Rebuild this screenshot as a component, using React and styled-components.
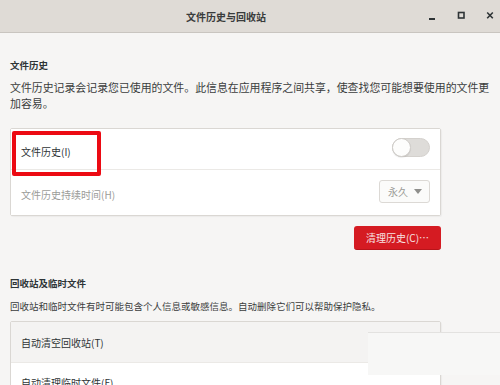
import styled, { createGlobalStyle } from 'styled-components';

const Global = createGlobalStyle`
  html, body {
    margin: 0;
    padding: 0;
    background: #f6f5f4;
  }
  body {
    font-family: "Noto Sans CJK SC", "Noto Sans", "DejaVu Sans", sans-serif;
    color: #2e3436;
  }
`;

const Window = styled.div`
  position: relative;
  width: 500px;
  height: 385px;
  overflow: hidden;
  background: #f6f5f4;
`;

const TitleBar = styled.div`
  height: 32px;
  display: flex;
  align-items: center;
  padding-left: 32px;
  background: #dfdbd6;
  border-bottom: 1px solid #c9c5c0;
`;

const Title = styled.div`
  flex: 1;
  text-align: center;
  font-size: 10px;
  font-weight: 700;
  color: #3a3c3c;
`;

const Controls = styled.div`
  width: 80px;
  display: flex;
  align-items: center;
  justify-content: flex-end;
  gap: 21px;
  padding-right: 6px;
  box-sizing: border-box;
`;

const Content = styled.div`
  padding: 24px 10px 0 10px;
  display: flex;
  flex-direction: column;
`;

const Heading = styled.div`
  font-size: 9.5px;
  font-weight: 700;
  line-height: 16px;
  color: #2e3436;
  margin-top: ${p => p.gap || 0}px;
`;

const Desc = styled.div`
  margin-top: ${p => p.gap || 6}px;
  font-size: ${p => p.size || 10}px;
  line-height: 16px;
  white-space: nowrap;
  color: #3b3d3d;
`;

const Card = styled.div`
  position: relative;
  width: 431px;
  box-sizing: border-box;
  margin-top: ${p => p.gap}px;
  background: #fff;
  border: 1px solid #dad7d3;
  border-radius: 2px;
  box-shadow: 1px 1px 1px rgba(0, 0, 0, 0.04);
`;

const Row = styled.div`
  height: ${p => p.h}px;
  display: flex;
  align-items: center;
  justify-content: space-between;
  padding: 0 10px;
  background: ${p => (p.shade ? '#f4f3f2' : '#fff')};
  border-top: ${p => (p.first ? 'none' : '1px solid #ebe9e6')};
`;

const Label = styled.span`
  font-size: 10px;
  color: ${p => (p.dim ? '#9b9c99' : '#2e3436')};
  padding-top: ${p => p.drop || 0}px;
`;

const Switch = styled.div`
  width: 38px;
  height: 19px;
  border-radius: 10px;
  background: #dedcd9;
  box-sizing: border-box;
  border: 1px solid #d4d1cd;
  display: flex;
  align-items: center;
  margin-top: -3px;
`;

const Knob = styled.div`
  width: 19px;
  height: 19px;
  margin-left: -1px;
  border-radius: 50%;
  background: #fdfdfc;
  border: 1px solid #cfccc8;
  box-sizing: border-box;
  box-shadow: 0 1px 1px rgba(0, 0, 0, 0.08);
`;

const Combo = styled.div`
  width: 51px;
  height: 23px;
  box-sizing: border-box;
  display: flex;
  align-items: center;
  justify-content: space-between;
  padding: 0 7px 0 8px;
  border: 1px solid #dcd9d5;
  border-radius: 3px;
  background: #fbfbfa;
  font-size: 10px;
  color: #9c9b98;
  margin-top: -3px;
`;

const Caret = styled.span`
  width: 0;
  height: 0;
  border-left: 4px solid transparent;
  border-right: 4px solid transparent;
  border-top: 5px solid #8f8f8c;
`;

const Actions = styled.div`
  width: 431px;
  display: flex;
  justify-content: flex-end;
  margin-top: 10px;
`;

const DangerButton = styled.div`
  width: 87px;
  height: 24px;
  display: flex;
  align-items: center;
  justify-content: center;
  border-radius: 3px;
  background: #d51b22;
  border-bottom: 1px solid #b8141a;
  box-sizing: border-box;
  font-size: 10px;
  color: #f7e1e1;
`;

const Marker = styled.div`
  position: absolute;
  left: 1px;
  top: 2px;
  width: 89px;
  height: 45px;
  box-sizing: border-box;
  border: 4px solid #ec0a13;
  border-radius: 2px;
  pointer-events: none;
`;

const Ghost = styled.div`
  position: absolute;
  left: 368px;
  top: 332px;
  width: 132px;
  height: 42px;
  background: #f7f7f6;
  border-top: 1px solid #e3e2e0;
`;

function WinIcon({ kind }) {
  if (kind === 'min')
    return (
      <svg width="8" height="10" viewBox="0 0 8 10">
        <rect x="1" y="7" width="6" height="2" fill="#2e3436" />
      </svg>
    );
  if (kind === 'max')
    return (
      <svg width="8" height="10" viewBox="0 0 8 10">
        <rect x="1.5" y="1.5" width="5.5" height="5.5" fill="none" stroke="#2e3436" strokeWidth="1.6" />
      </svg>
    );
  return (
    <svg width="8" height="10" viewBox="0 0 8 10">
      <path d="M1.2 1.5 L6.8 7.2 M6.8 1.5 L1.2 7.2" stroke="#2e3436" strokeWidth="1.6" />
    </svg>
  );
}

export default function App() {
  return (
    <Window>
      <Global />
      <TitleBar>
        <Title>文件历史与回收站</Title>
        <Controls>
          <WinIcon kind="min" />
          <WinIcon kind="max" />
          <WinIcon kind="close" />
        </Controls>
      </TitleBar>

      <Content>
        <Heading>文件历史</Heading>
        <Desc size={10.9}>
          文件历史记录会记录您已使用的文件。此信息在应用程序之间共享，使查找您可能想要使用的文件更
          <br />
          加容易。
        </Desc>

        <Card gap={17}>
          <Row h={40} first>
            <Label drop={4}>文件历史(I)</Label>
            <Switch>
              <Knob />
            </Switch>
          </Row>
          <Row h={45}>
            <Label dim drop={3}>文件历史持续时间(H)</Label>
            <Combo>
              永久
              <Caret />
            </Combo>
          </Row>
          <Marker />
        </Card>

        <Actions>
          <DangerButton>清理历史(C)…</DangerButton>
        </Actions>

        <Heading gap={25}>回收站及临时文件</Heading>
        <Desc size={9.5} gap={7}>
          回收站和临时文件有时可能包含个人信息或敏感信息。自动删除它们可以帮助保护隐私。
        </Desc>

        <Card gap={7}>
          <Row h={40} first shade>
            <Label>自动清空回收站(T)</Label>
          </Row>
          <Row h={38}>
            <Label>自动清理临时文件(F)</Label>
          </Row>
        </Card>
      </Content>
      <Ghost />
    </Window>
  );
}
